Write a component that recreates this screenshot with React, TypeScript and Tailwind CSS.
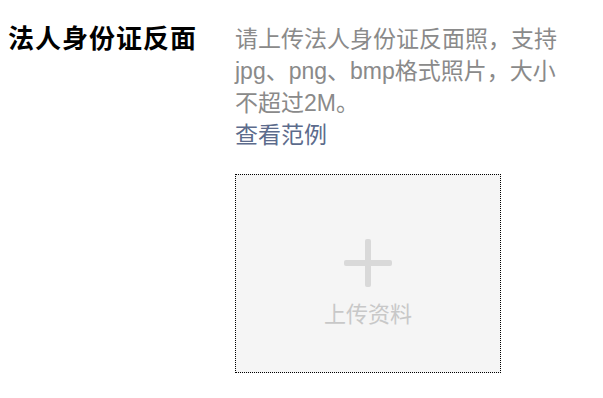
import React from 'react';

const UploadBox: React.FC<{ label: string }> = ({ label }) => (
  <div className="mt-[23px] w-[266px] h-[199px] border border-dotted border-black bg-[#f5f5f5] flex flex-col items-center justify-center">
    <svg width="48" height="48" viewBox="0 0 48 48" className="mt-[20px]">
      <rect x="21" y="0" width="6" height="48" rx="2" fill="#d9d9d9" />
      <rect x="0" y="21" width="48" height="6" rx="2" fill="#d9d9d9" />
    </svg>
    <span className="mt-[14px] text-[22px] leading-[28px] text-[#c8c8c8]">{label}</span>
  </div>
);

export default function App() {
  return (
    <div
      className="flex w-[603px] h-[398px] bg-white pt-[23px] pl-[8px]"
      style={{ fontFamily: '"Liberation Sans", "Noto Sans CJK SC", sans-serif' }}
    >
      <div className="w-[227px] shrink-0 text-[26px] leading-[32px] font-bold text-black tracking-[1px]">
        法人身份证反面
      </div>
      <div className="flex flex-col">
        <p className="w-[334px] text-[23px] leading-[32px] text-[#8a8a8a]">
          请上传法人身份证反面照，支持jpg、png、bmp格式照片，大小不超过2M。
        </p>
        <a className="text-[23px] leading-[32px] text-[#5c6b8c] cursor-pointer">查看范例</a>
        <UploadBox label="上传资料" />
      </div>
    </div>
  );
}
